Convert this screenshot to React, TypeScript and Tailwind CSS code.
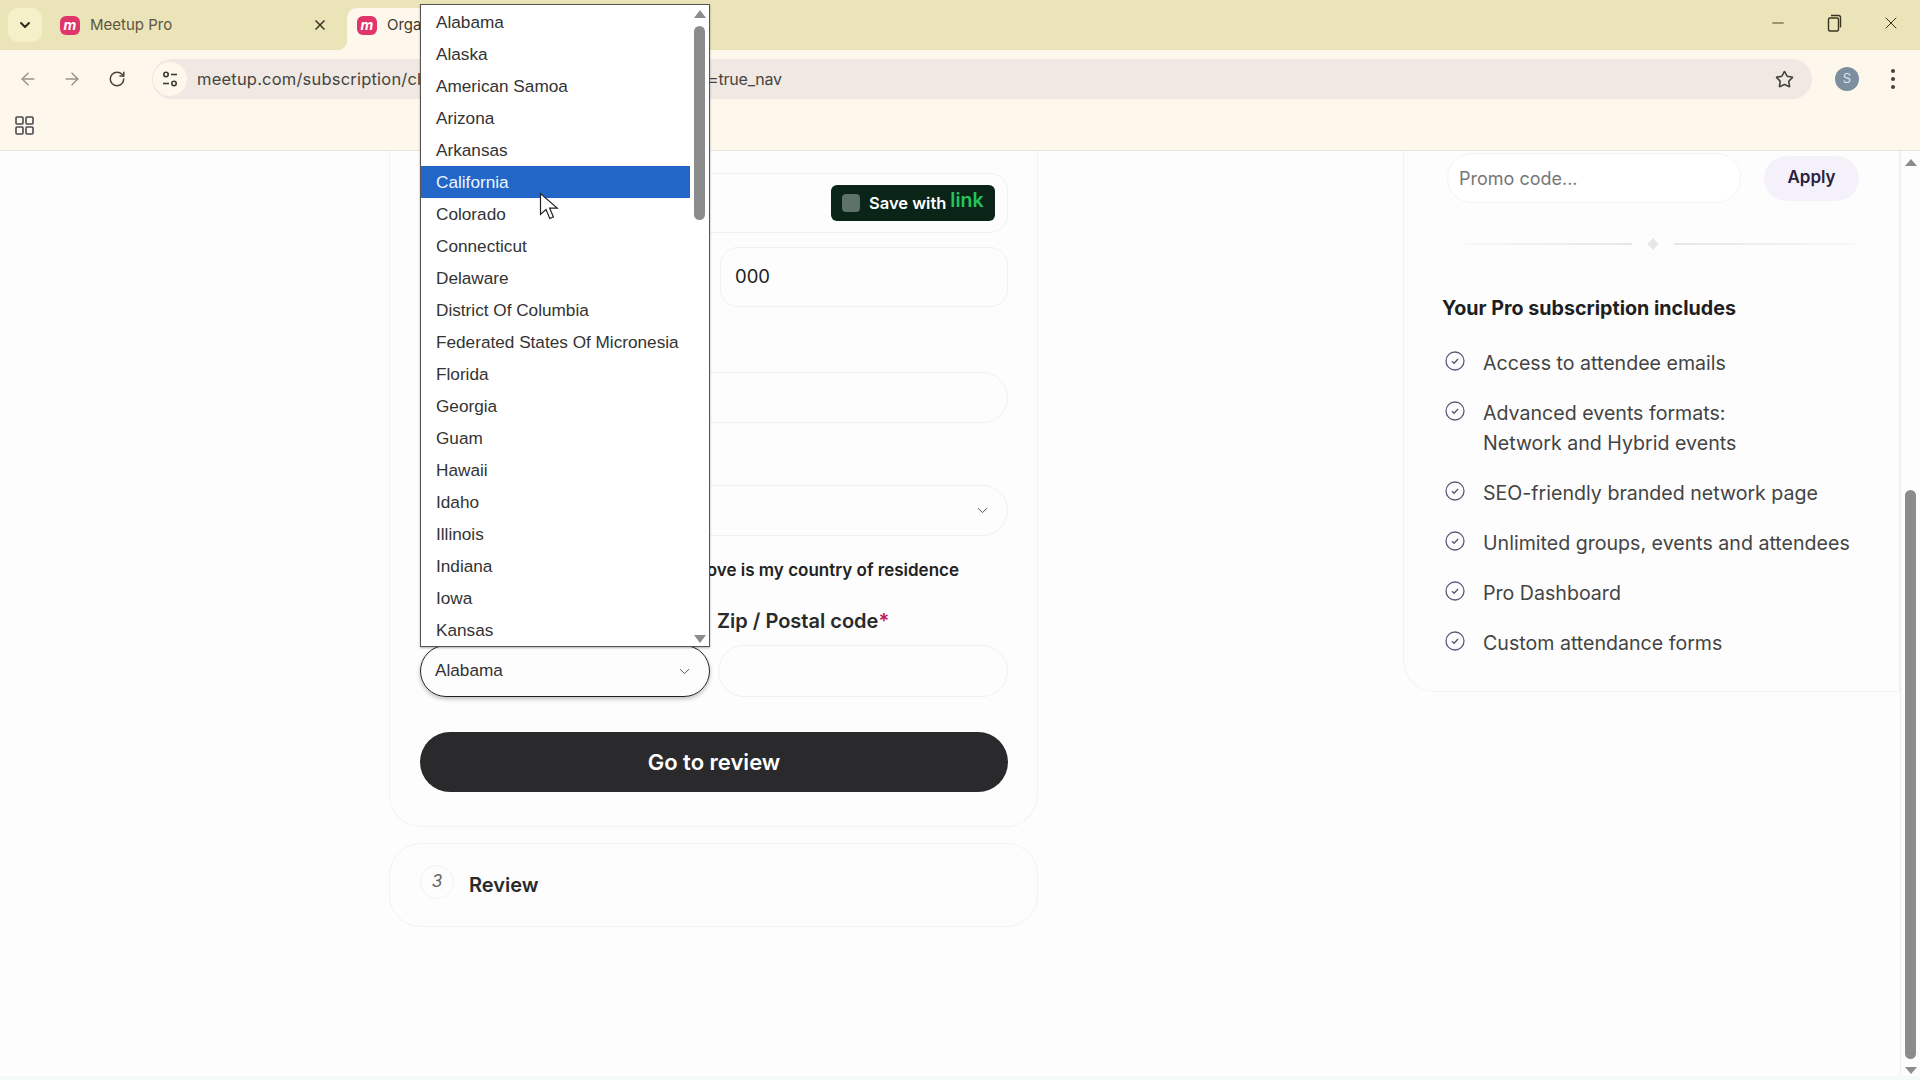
import { ArrowLeft, ArrowRight, ChevronDown, Minus, RotateCw, Star, X } from "lucide-react";

const states = [
  "Alabama",
  "Alaska",
  "American Samoa",
  "Arizona",
  "Arkansas",
  "California",
  "Colorado",
  "Connecticut",
  "Delaware",
  "District Of Columbia",
  "Federated States Of Micronesia",
  "Florida",
  "Georgia",
  "Guam",
  "Hawaii",
  "Idaho",
  "Illinois",
  "Indiana",
  "Iowa",
  "Kansas",
];

const Favicon = () => (
  <div className="w-[20px] h-[19px] rounded-[6px] bg-[#e0356a] flex items-center justify-center text-white text-[14px] leading-none font-bold italic shrink-0">
    m
  </div>
);

const CheckCircle = () => (
  <svg width="20" height="20" viewBox="0 0 20 20" fill="none" stroke="#5f5878" strokeWidth="1.3" className="shrink-0 mt-[3px]">
    <circle cx="10" cy="10" r="9" />
    <path d="M7 10.2l2.1 2 4-4.2" strokeWidth="1.5" />
  </svg>
);

const TabStrip = () => (
  <div className="h-[50px] bg-[#ebe4b8] flex items-end">
    <div className="w-[34px] h-[34px] ml-2 mb-2 rounded-[10px] bg-[#f6f0c8] flex items-center justify-center shrink-0">
      <ChevronDown size={16} strokeWidth={3} className="text-[#2e2a1c]" />
    </div>
    <div className="w-[305px] h-[42px] flex items-center pl-[18px] pr-[19px] pb-[8px] gap-[10px]">
      <Favicon />
      <span className="text-[15px] text-[#5b5542] flex-1">Meetup Pro</span>
      <X size={16} strokeWidth={2.5} className="text-[#3c3826]" />
    </div>
    <div className="relative w-[300px] h-[42px] bg-[#fef7eb] rounded-t-[10px] flex items-center pl-[10px] pb-[8px] gap-[10px]">
      <div className="absolute -left-[10px] bottom-0 w-[10px] h-[10px] bg-[radial-gradient(circle_at_0_0,transparent_10px,#fef7eb_10.5px)]" />
      <div className="absolute -right-[10px] bottom-0 w-[10px] h-[10px] bg-[radial-gradient(circle_at_100%_0,transparent_10px,#fef7eb_10.5px)]" />
      <Favicon />
      <span className="w-[33px] overflow-hidden whitespace-nowrap text-[15px] text-[#3e3a2c]">Organizer</span>
    </div>
    <div className="flex-1" />
    <div className="flex items-center h-[46px] mb-[4px] text-[#3a3520]">
      <Minus size={18} strokeWidth={1.2} className="mr-[38px]" />
      <svg width="18" height="20" viewBox="0 0 18 20" fill="none" stroke="currentColor" strokeWidth="1.4" className="mr-[38px]">
        <rect x="3.5" y="5" width="10" height="13" rx="1.5" />
        <path d="M6 2.5h7.5a2 2 0 0 1 2 2v10" />
      </svg>
      <X size={20} strokeWidth={1.2} className="mr-[19px]" />
    </div>
  </div>
);

const Toolbar = () => (
  <div className="h-[50px] pt-[8px] bg-[#fef7eb] flex items-center">
    <ArrowLeft size={20} strokeWidth={1.8} className="ml-[18px] text-[#9a9488]" />
    <ArrowRight size={20} strokeWidth={1.8} className="ml-[24px] text-[#9a9488]" />
    <RotateCw size={18} strokeWidth={2} className="ml-[26px] text-[#4a4538]" />
    <div className="ml-[26px] w-[1660px] h-[40px] rounded-full bg-[#efe8e3] flex items-center pl-[1px]">
      <div className="w-[34px] h-[34px] rounded-full bg-[#fef7eb] flex items-center justify-center shrink-0">
        <svg width="18" height="18" viewBox="0 0 18 18" fill="none" stroke="#3c3a34" strokeWidth="1.6">
          <circle cx="5" cy="4.5" r="2.2" />
          <path d="M10 4.5h6" />
          <circle cx="13" cy="13.5" r="2.2" />
          <path d="M2 13.5h6" />
        </svg>
      </div>
      <span className="ml-[10px] w-[223px] overflow-hidden whitespace-nowrap text-[16.5px] text-[#48443e] tracking-[0.2px]">
        meetup.com/subscription/checkout
      </span>
      <span className="ml-[288px] text-[16px] text-[#48443e] tracking-[-0.2px]">=true_nav</span>
      <div className="flex-1" />
      <Star size={19} strokeWidth={2} className="mr-[18px] text-[#45403a]" />
    </div>
    <div className="ml-[23px] w-[24px] h-[24px] rounded-full bg-[#7d8f9e] text-[#d5e6f2] text-[13px] flex items-center justify-center">S</div>
    <div className="ml-[32px] flex flex-col gap-[4px]">
      <div className="w-[4px] h-[4px] rounded-full bg-[#45403a]" />
      <div className="w-[4px] h-[4px] rounded-full bg-[#45403a]" />
      <div className="w-[4px] h-[4px] rounded-full bg-[#45403a]" />
    </div>
  </div>
);

const BookmarkBar = () => (
  <div className="h-[51px] bg-[#fef7eb] border-b border-[#e9e4da] flex items-center pl-[15px]">
    <svg width="19" height="19" viewBox="0 0 19 19" fill="none" stroke="#4a4a50" strokeWidth="1.6">
      <rect x="1" y="1" width="7" height="7" rx="1" />
      <rect x="11" y="1" width="7" height="7" rx="1" />
      <rect x="1" y="11" width="7" height="7" rx="1" />
      <rect x="11" y="11" width="7" height="7" rx="1" />
    </svg>
  </div>
);

const CheckoutForm = () => (
  <div className="ml-[389px] w-[649px]">
    <div className="h-[676px] border-x border-b border-[#f3f3f3] rounded-b-[32px] pl-[30px] pr-[29px] pt-[22px]">
      <div className="h-[60px] border border-[#f1f1f1] rounded-[18px] flex items-center justify-end pr-[12px]">
        <div className="h-[36px] w-[164px] bg-[#0a2418] rounded-[6px] flex items-center pl-[11px]">
          <div className="w-[18px] h-[18px] rounded-[4px] bg-[#5e7268]" />
          <span className="ml-[9px] text-[16.5px] font-semibold text-white">Save with</span>
          <span className="ml-[4px] text-[19.5px] leading-none font-semibold text-[#22c55e] -mt-1">link</span>
        </div>
      </div>
      <div className="mt-[14px] flex justify-end">
        <div className="w-[288px] h-[60px] border border-[#f1f1f1] rounded-[18px] flex items-center pl-[14px] text-[18.5px] text-[#222]">000</div>
      </div>
      <div className="mt-[65px] h-[51px] border border-[#f1f1f1] rounded-full" />
      <div className="mt-[62px] h-[51px] border border-[#f1f1f1] rounded-full flex items-center justify-end pr-[16px]">
        <ChevronDown size={17} strokeWidth={1.4} className="text-[#555]" />
      </div>
      <div className="mt-[24px] h-[20px] flex items-center justify-end pr-[49px] text-[17px] leading-none font-semibold text-[#222]">
        above is my country of residence
      </div>
      <div className="mt-[27px] flex gap-[8px]">
        <div className="w-[290px]" />
        <div className="flex-1 text-[20px] leading-[28px] font-semibold text-[#2a2a2a] -ml-[1px]">
          Zip / Postal code<span className="text-[#c2185b]">*</span>
        </div>
      </div>
      <div className="mt-[10px] flex gap-[8px]">
        <div className="w-[290px] h-[52px] border-[1.5px] border-[#222] rounded-full flex items-center justify-between pl-[14px] pr-[16px] text-[17.2px] text-[#333] shadow-[0_2px_4px_rgba(0,0,0,0.25)] font-['Liberation_Sans',sans-serif]">
          Alabama
          <ChevronDown size={17} strokeWidth={1.4} className="text-[#555]" />
        </div>
        <div className="flex-1 h-[52px] border border-[#f1f1f1] rounded-full" />
      </div>
      <div className="mt-[35px] h-[60px] bg-[#2a2a2c] rounded-full flex items-center justify-center text-white text-[22px] font-semibold">
        Go to review
      </div>
    </div>
    <div className="mt-[16px] h-[84px] border border-[#f3f3f3] rounded-[32px] flex items-center pl-[30px]">
      <div className="w-[34px] h-[34px] rounded-full border border-[#f3f3f3] flex items-center justify-center text-[17px] italic text-[#666] -mt-[6px]">3</div>
      <span className="ml-[15px] text-[20px] font-semibold text-[#2a2a2a]">Review</span>
    </div>
  </div>
);

const features = [
  ["Access to attendee emails"],
  ["Advanced events formats:", "Network and Hybrid events"],
  ["SEO-friendly branded network page"],
  ["Unlimited groups, events and attendees"],
  ["Pro Dashboard"],
  ["Custom attendance forms"],
];

const Summary = () => (
  <div className="ml-[365px] w-[497px] h-[541px] border-x border-b border-[#f3f3f3] rounded-bl-[32px] pl-[38px] pt-[2px]">
    <div className="flex items-center">
      <div className="ml-[5px] w-[294px] h-[50px] border border-[#f3f3f3] bg-white rounded-full flex items-center pl-[11px] text-[18px] text-[#777]">
        Promo code...
      </div>
      <div className="ml-[23px] w-[95px] h-[45px] rounded-full bg-[#f5f1fa] flex items-center justify-center text-[17px] font-semibold text-[#2a2140]">
        Apply
      </div>
    </div>
    <div className="mt-[37px] ml-[22px] flex items-center w-[395px]">
      <div className="w-[168px] h-[2px] bg-gradient-to-r from-[#f8f8f8] to-[#e6e6e6]" />
      <div className="mx-[17px] w-[8px] h-[8px] bg-[#e6e6e6] rotate-45" />
      <div className="w-[183px] h-[2px] bg-gradient-to-r from-[#e6e6e6] to-[#f8f8f8]" />
    </div>
    <h3 className="mt-[46px] text-[19.7px] leading-[28px] font-bold text-[#1f1f1f]">Your Pro subscription includes</h3>
    <ul className="mt-[26px] flex flex-col gap-[20px] text-[19.6px] leading-[30px] text-[#444]">
      {features.map((lines) => (
        <li key={lines[0]} className="flex gap-[18px] ml-[3px]">
          <CheckCircle />
          <span>
            {lines[0]}
            {lines[1] && <br />}
            {lines[1]}
          </span>
        </li>
      ))}
    </ul>
  </div>
);

const PageScrollbar = () => (
  <div className="w-[20px] border-l border-[#eee] flex flex-col items-center pt-[8px] pb-[2px]">
    <div className="w-0 h-0 border-x-[6px] border-x-transparent border-b-[7px] border-b-[#8c8c8c]" />
    <div className="mt-[324px] w-[11px] flex-1 rounded-full bg-[#8c8c8c]" />
    <div className="mt-[8px] w-0 h-0 border-x-[6px] border-x-transparent border-t-[7px] border-t-[#8c8c8c]" />
  </div>
);

const StateDropdown = () => (
  <div className="absolute left-[420px] top-[4px] w-[290px] h-[643px] bg-white border border-[#555] flex font-['Liberation_Sans',sans-serif] shadow-[0_1px_2px_rgba(0,0,0,0.3)]">
    <ul className="w-[269px] pt-[1px]">
      {states.map((s) => (
        <li
          key={s}
          className={
            s === "California"
              ? "h-[32px] pl-[15px] pt-[1px] flex items-center whitespace-nowrap text-[17.2px] bg-[#2266c8] text-[#eef6ff]"
              : "h-[32px] pl-[15px] pt-[1px] flex items-center whitespace-nowrap text-[17.2px] text-[#333]"
          }
        >
          {s}
        </li>
      ))}
    </ul>
    <div className="flex-1 flex flex-col items-center pt-[5px] pb-[3px]">
      <div className="w-0 h-0 border-x-[6px] border-x-transparent border-b-[8px] border-b-[#8c8c8c]" />
      <div className="mt-[8px] w-[11px] h-[194px] rounded-full bg-[#8c8c8c]" />
      <div className="flex-1" />
      <div className="w-0 h-0 border-x-[6px] border-x-transparent border-t-[8px] border-t-[#8c8c8c]" />
    </div>
  </div>
);

const Cursor = () => (
  <svg width="22" height="30" viewBox="0 0 22 30" className="absolute left-[539px] top-[192px]" fill="#fff" stroke="#222" strokeWidth="1.2">
    <path d="M1.5 1.5v21l5.5-5 3.8 9 3.6-1.6-3.8-8.8h7.6z" />
  </svg>
);

export default function App() {
  return (
    <div className="relative w-[1920px] h-[1080px] overflow-hidden flex flex-col bg-[#fdfdfd] font-['Inter',sans-serif]">
      <TabStrip />
      <Toolbar />
      <BookmarkBar />
      <div className="flex-1 flex min-h-0">
        <div className="flex-1 flex items-start">
          <CheckoutForm />
          <Summary />
        </div>
        <PageScrollbar />
      </div>
      <div className="h-[4px] bg-[#f4faf8]" />
      <StateDropdown />
      <Cursor />
    </div>
  );
}
